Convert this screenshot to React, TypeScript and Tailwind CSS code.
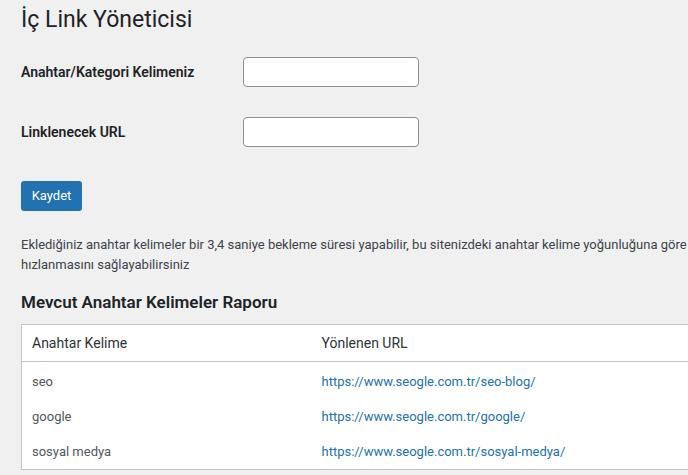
import React from 'react';

const rows = [
  { keyword: 'seo', url: 'https://www.seogle.com.tr/seo-blog/' },
  { keyword: 'google', url: 'https://www.seogle.com.tr/google/' },
  { keyword: 'sosyal medya', url: 'https://www.seogle.com.tr/sosyal-medya/' },
];

export default function App() {
  return (
    <div
      className="w-[688px] h-[475px] overflow-hidden bg-[#f0f0f1] text-[#3c434a] text-[13px]"
      style={{ fontFamily: 'Roboto, "Liberation Sans", sans-serif' }}
    >
      <div className="w-[1000px] pl-[21px]">
        <h1 className="pt-[5px] text-[23px] leading-[30px] font-normal text-[#1d2327]">İç Link Yöneticisi</h1>

        <div className="mt-[22px] flex items-center h-[30px]">
          <label className="w-[222px] text-[14px] font-semibold text-[#1d2327]">Anahtar/Kategori Kelimeniz</label>
          <input className="w-[176px] h-[30px] bg-white border border-[#8c8f94] rounded-[4px]" />
        </div>
        <div className="mt-[30px] flex items-center h-[30px]">
          <label className="w-[222px] text-[14px] font-semibold text-[#1d2327]">Linklenecek URL</label>
          <input className="w-[176px] h-[30px] bg-white border border-[#8c8f94] rounded-[4px]" />
        </div>

        <button className="mt-[34px] h-[30px] w-[61px] bg-[#2271b1] text-white rounded-[3px] text-[13px]">
          Kaydet
        </button>

        <p className="mt-[24px] leading-[20px]">
          Eklediğiniz anahtar kelimeler bir 3,4 saniye bekleme süresi yapabilir, bu sitenizdeki anahtar kelime yoğunluğuna göre
          <br />
          hızlanmasını sağlayabilirsiniz
        </p>

        <h2 className="mt-[15px] text-[17px] leading-[24px] font-semibold text-[#1d2327]">Mevcut Anahtar Kelimeler Raporu</h2>

        <table className="mt-[10px] w-[800px] bg-white border border-[#c3c4c7] border-collapse">
          <thead>
            <tr className="border-b border-[#c3c4c7]">
              <th className="w-[290px] h-[37px] px-[10px] text-left font-normal text-[14px] text-[#2c3338]">Anahtar Kelime</th>
              <th className="px-[10px] text-left font-normal text-[14px] text-[#2c3338]">Yönlenen URL</th>
            </tr>
          </thead>
          <tbody>
            {rows.map((r, i) => (
              <tr key={r.keyword}>
                <td className={i === 0 ? 'h-[38px] px-[10px] pt-[2px] text-[#50575e]' : 'h-[35px] px-[10px] text-[#50575e]'}>{r.keyword}</td>
                <td className={i === 0 ? 'px-[10px] pt-[2px]' : 'px-[10px]'}>
                  <a className="text-[#2271b1]">{r.url}</a>
                </td>
              </tr>
            ))}
          </tbody>
        </table>
      </div>
    </div>
  );
}
